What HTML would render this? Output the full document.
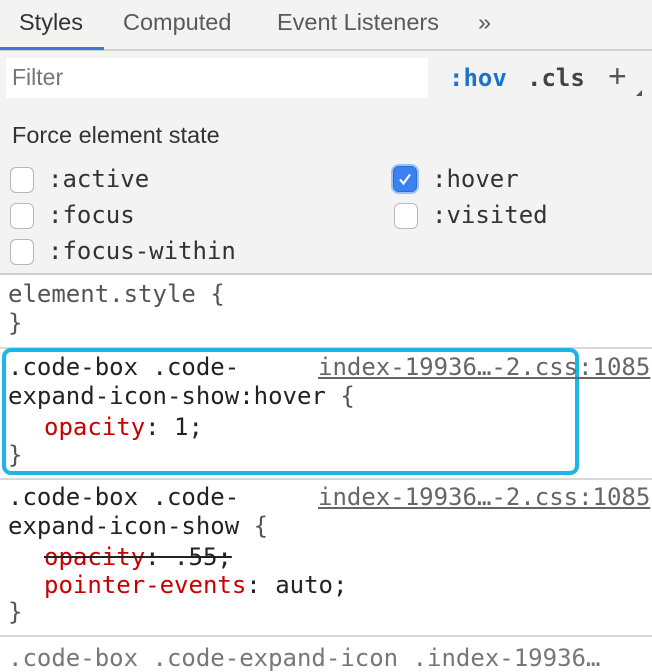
<!DOCTYPE html>
<html><head><meta charset="utf-8"><style>
*{margin:0;padding:0;box-sizing:border-box}
body{width:652px;height:646px;overflow:hidden;background:#fff;position:relative;font-family:"Liberation Sans",Arial,sans-serif}
.top{position:absolute;left:0;top:0;width:652px;height:275px;background:#f3f3f3;border-bottom:2px solid #d0d0d0}
.tabs{position:absolute;top:0;left:0;width:652px;height:51px;border-bottom:2px solid #d0d0d0}
.tab{position:absolute;top:9px;font-size:23.5px;color:#5a5a5a}
.ul{position:absolute;left:0;top:47px;width:104px;height:3px;background:#3879d9}
.filter{position:absolute;left:6px;top:58px;width:422px;height:40px;background:#fff;font-size:23px;color:#777;padding:6px 6px}
.mono{font-family:"DejaVu Sans Mono","Liberation Mono",monospace}
.abs{position:absolute;white-space:pre}
.cb{position:absolute;width:24px;height:26px;border:1.5px solid #b8b8b8;border-radius:6px;background:#fff}
.code{font-size:24px;color:#222}
.sep{position:absolute;left:0;width:652px;height:2px;background:#d8d8d8}
.red{color:#c80000}
.link{color:#666;text-decoration:underline}
</style></head><body>
<div class="top">
 <div class="tabs">
  <div class="tab" style="left:19px;color:#333">Styles</div>
  <div class="tab" style="left:123px">Computed</div>
  <div class="tab" style="left:277px">Event Listeners</div>
  <div class="tab" style="left:478px">»</div>
  <div class="ul"></div>
 </div>
 <div class="filter">Filter</div>
 <div class="abs mono" style="left:449px;top:64px;font-size:24px;font-weight:bold;color:#1a73c8">:hov</div>
 <div class="abs mono" style="left:527px;top:64px;font-size:24px;font-weight:bold;color:#444">.cls</div>
 <div class="abs" style="left:608px;top:58px;font-size:32px;color:#555">+</div>
 <div class="abs" style="left:636px;top:90px;width:0;height:0;border-left:6px solid transparent;border-bottom:6px solid #555"></div>
 <div class="abs" style="left:12px;top:122px;font-size:23.5px;color:#333">Force element state</div>
 <div class="cb" style="left:10px;top:167px"></div>
 <div class="abs mono" style="left:48px;top:165px;font-size:24px;color:#333">:active</div>
 <div class="cb" style="left:10px;top:203px"></div>
 <div class="abs mono" style="left:48px;top:201px;font-size:24px;color:#333">:focus</div>
 <div class="cb" style="left:10px;top:239px"></div>
 <div class="abs mono" style="left:48px;top:237px;font-size:24px;color:#333">:focus-within</div>
 <div class="cb" style="left:393px;top:166px;background:#3b82f0;border-color:#2d6bd0;box-shadow:0 0 0 2px #9cc0f5">
  <svg width="22" height="24" viewBox="0 0 22 24" style="position:absolute;left:0;top:0"><path d="M6 12.5l3.5 4 6.5-9" fill="none" stroke="#fff" stroke-width="2.2"/></svg></div>
 <div class="abs mono" style="left:432px;top:165px;font-size:24px;color:#333">:hover</div>
 <div class="cb" style="left:394px;top:203px"></div>
 <div class="abs mono" style="left:432px;top:201px;font-size:24px;color:#333">:visited</div>
</div>
<div class="abs mono code" style="left:8px;top:280px;color:#555">element.style {</div>
<div class="abs mono code" style="left:8px;top:309px;color:#555">}</div>
<div class="sep" style="top:347px"></div>
<div class="abs" style="left:2px;top:348px;width:577px;height:127px;border:4px solid #1cb5e8;border-radius:9px"></div>
<div class="abs mono code" style="left:8px;top:353px">.code-box .code-</div>
<div class="abs mono code link" style="left:318px;top:353px">index-19936…-2.css:1085</div>
<div class="abs mono code" style="left:8px;top:382px">expand-icon-show:hover <span style="color:#555">{</span></div>
<div class="abs mono code" style="left:44px;top:413px"><span class="red">opacity</span>: 1;</div>
<div class="abs mono code" style="left:8px;top:441px;color:#555">}</div>
<div class="sep" style="top:478px"></div>
<div class="abs mono code" style="left:8px;top:483px">.code-box .code-</div>
<div class="abs mono code link" style="left:318px;top:483px">index-19936…-2.css:1085</div>
<div class="abs mono code" style="left:8px;top:512px">expand-icon-show <span style="color:#555">{</span></div>
<div class="abs mono code" style="left:44px;top:543px;text-decoration:line-through"><span class="red">opacity</span>: .55;</div>
<div class="abs mono code" style="left:44px;top:571px"><span class="red">pointer-events</span>: auto;</div>
<div class="abs mono code" style="left:8px;top:598px;color:#555">}</div>
<div class="sep" style="top:635px"></div>
<div class="abs mono code" style="left:8px;top:644px;color:#777">.code-box .code-expand-icon .index-19936…</div>
</body></html>
